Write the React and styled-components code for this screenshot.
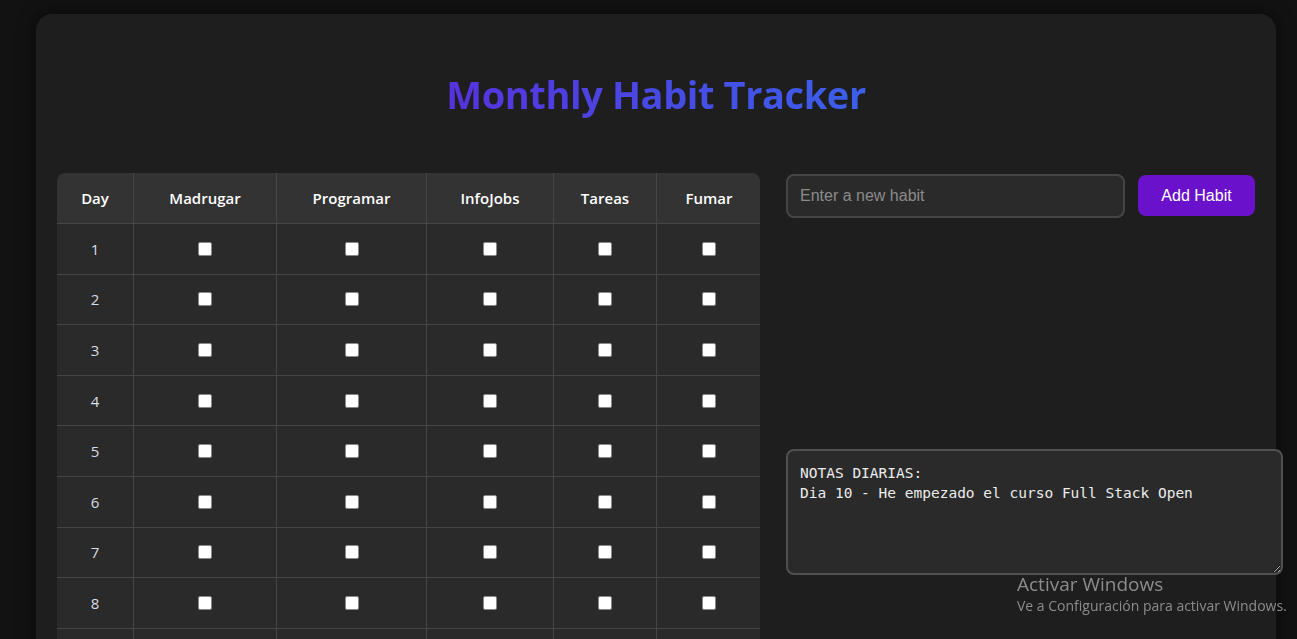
import styled, { createGlobalStyle } from "styled-components"

const GlobalStyle = createGlobalStyle`
    body {
        margin: 0;
        background-color: #121212;
        font-family: "Open Sans", "Noto Sans", sans-serif;
        color: #e6e6e6;
    }
`
const Container = styled.div`
    margin: 14px 21px 0 36px;
    padding: 53px 21px 40px;
    background-color: #1e1e1e;
    border-radius: 16px;
    box-shadow: 0 0 18px rgba(0, 0, 0, 0.55);
`
const Title = styled.h1`
    margin: 0 0 52px;
    text-align: center;
    font-size: 38px;
    font-weight: 700;
    line-height: 54px;
    letter-spacing: -0.4px;
`
const Gradient = styled.span`
    background: linear-gradient(90deg, #5632de, #3b60ea);
    -webkit-background-clip: text;
    background-clip: text;
    color: transparent;
`
const Main = styled.div`
    display: flex;
    align-items: flex-start;
    gap: 26px;
`
const TableWrap = styled.div`
    width: 703px;
    flex-shrink: 0;
    border-radius: 8px 8px 0 0;
    overflow: hidden;
`
const Table = styled.table`
    width: 703px;
    border-collapse: collapse;
    table-layout: fixed;
`
const Th = styled.th`
    width: ${(p) => p.$w}px;
    height: 50px;
    padding: 0;
    background-color: #333333;
    color: #ffffff;
    font-size: 15px;
    font-weight: 600;
    text-align: center;
    border-right: 1px solid #454545;
    border-bottom: 1px solid #454545;
    &:last-child {
        border-right: none;
    }
`
const Row = styled.tr`
    height: 50.6px;
`
const Td = styled.td`
    padding: 0;
    background-color: #2a2a2a;
    color: #d8dce4;
    font-size: 15px;
    text-align: center;
    border-right: 1px solid #454545;
    border-bottom: 1px solid #454545;
    &:last-child {
        border-right: none;
    }
`
const Check = styled.input`
    appearance: none;
    display: block;
    margin: 0 auto;
    width: 14px;
    height: 14px;
    background-color: #ffffff;
    border: 1px solid #8a8a8a;
    border-radius: 2px;
`
const Side = styled.div`
    flex: 1;
    min-width: 0;
`
const Form = styled.div`
    display: flex;
    align-items: center;
    gap: 13px;
`
const Input = styled.input`
    flex: 1;
    min-width: 0;
    box-sizing: border-box;
    height: 44px;
    margin-top: 1px;
    padding: 0 12px;
    background-color: #2a2a2a;
    border: 2px solid #454545;
    border-radius: 8px;
    color: #e0e0e0;
    font-family: "Liberation Sans", Arial, sans-serif;
    font-size: 16px;
    outline: none;
    &::placeholder {
        color: #8a8a8a;
    }
`
const Button = styled.button`
    width: 117px;
    height: 41px;
    background-color: #6a12cb;
    border: none;
    border-radius: 8px;
    color: #ffffff;
    font-family: "Liberation Sans", Arial, sans-serif;
    font-size: 16px;
    cursor: pointer;
`
const Notes = styled.textarea`
    display: block;
    width: 100%;
    height: 98px;
    margin-top: 231px;
    padding: 12px;
    background-color: #2a2a2a;
    border: 2px solid #505050;
    border-radius: 8px;
    color: #ececec;
    font-family: "DejaVu Sans Mono", "Liberation Mono", monospace;
    font-size: 14.5px;
    font-weight: 500;
    line-height: 20px;
    outline: none;
`
const Watermark = styled.div`
    position: fixed;
    left: 1017px;
    top: 572px;
    color: #8c8c8c;
    font-family: "Open Sans", "Noto Sans", sans-serif;
    pointer-events: none;
`
const WmTitle = styled.div`
    font-size: 19px;
    line-height: 24px;
`
const WmText = styled.div`
    font-size: 14px;
    line-height: 20px;
`

const columns = [
    { name: "Day", w: 76 },
    { name: "Madrugar", w: 142 },
    { name: "Programar", w: 149 },
    { name: "InfoJobs", w: 126 },
    { name: "Tareas", w: 102 },
    { name: "Fumar", w: 104 },
]
const habits = columns.slice(1)
const days = Array.from({ length: 31 }, (_, i) => i + 1)

function App() {
    return (
        <>
            <GlobalStyle />
            <Container>
                <Title><Gradient>Monthly Habit Tracker</Gradient></Title>
                <Main>
                    <TableWrap>
                        <Table>
                            <thead>
                                <tr>
                                    {columns.map((c) => (
                                        <Th key={c.name} $w={c.w}>{c.name}</Th>
                                    ))}
                                </tr>
                            </thead>
                            <tbody>
                                {days.map((d) => (
                                    <Row key={d}>
                                        <Td>{d}</Td>
                                        {habits.map((h) => (
                                            <Td key={h.name}><Check type="checkbox" /></Td>
                                        ))}
                                    </Row>
                                ))}
                            </tbody>
                        </Table>
                    </TableWrap>
                    <Side>
                        <Form>
                            <Input placeholder="Enter a new habit" />
                            <Button>Add Habit</Button>
                        </Form>
                        <Notes defaultValue={"NOTAS DIARIAS:\nDia 10 - He empezado el curso Full Stack Open"} />
                    </Side>
                </Main>
            </Container>
            <Watermark>
                <WmTitle>Activar Windows</WmTitle>
                <WmText>Ve a Configuración para activar Windows.</WmText>
            </Watermark>
        </>
    )
}

export default App
